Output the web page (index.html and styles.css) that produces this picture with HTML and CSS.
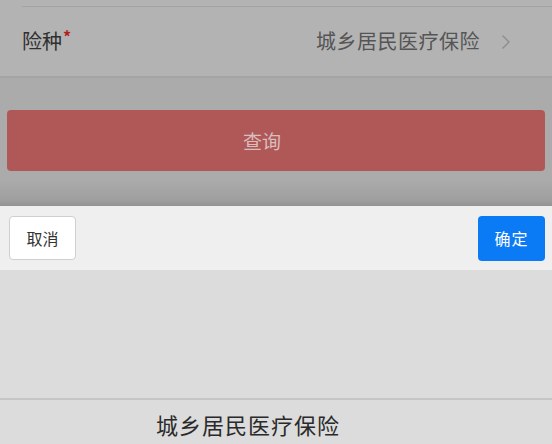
FILE: index.html
```html
<!DOCTYPE html>
<html lang="zh-CN">
<head>
<meta charset="utf-8">
<link rel="stylesheet" href="styles.css">
</head>
<body>
<div class="screen">
  <div class="form">
    <div class="top">
      <div class="cell">
        <div class="label">险种<span class="req">*</span></div>
        <div class="value">城乡居民医疗保险</div>
        <svg class="arrow" width="10" height="16" viewBox="0 0 10 16"><path d="M1.5 1.5 L8 8 L1.5 14.5" fill="none" stroke="#8d8d8d" stroke-width="1.4"/></svg>
      </div>
    </div>
    <div class="actions">
      <button class="query">查询</button>
    </div>
  </div>
  <div class="picker">
    <div class="toolbar">
      <button class="cancel">取消</button>
      <button class="ok">确定</button>
    </div>
    <div class="wheel">
      <div class="item">城乡居民医疗保险</div>
    </div>
  </div>
</div>
</body>
</html>
```
FILE: styles.css
```css
html, body {
  margin: 0;
  padding: 0;
}
body {
  width: 552px;
  height: 444px;
  overflow: hidden;
  font-family: "Noto Sans CJK SC", "Noto Sans", sans-serif;
  background: #b2b2b2;
}
.screen {
  display: flex;
  flex-direction: column;
  height: 444px;
}
.form {
  height: 206px;
  display: flex;
  flex-direction: column;
  background: linear-gradient(to bottom, #ababab 0, #ababab 180px, #9f9f9f 200px, #939393 206px);
}
.top {
  background: #b3b3b3;
  padding-top: 6px;
  border-bottom: 2px solid #a4a4a4;
}
.cell {
  height: 70px;
  display: flex;
  align-items: center;
  padding: 0 72px 0 22px;
  position: relative;
}
.cell::before {
  content: "";
  position: absolute;
  left: 22px;
  right: 0;
  top: 0;
  border-top: 1px solid #a3a3a3;
}
.label {
  font-size: 20px;
  color: #2f2f2f;
  flex: 1;
  margin-top: -2px;
}
.req {
  color: #b41e1e;
  font-size: 16px;
  font-weight: bold;
  vertical-align: top;
  position: relative;
  top: -2px;
  margin-left: 1px;
}
.value {
  font-size: 20px;
  color: #555555;
  letter-spacing: 0.5px;
  margin-top: -2px;
}
.arrow {
  position: absolute;
  right: 41px;
  top: 28px;
}
.actions {
  padding: 32px 7px 0 7px;
}
.query {
  display: block;
  width: 100%;
  height: 61px;
  border: none;
  border-radius: 4px;
  background: #b05858;
  color: #d9bebe;
  font-family: inherit;
  font-size: 19px;
  padding: 0 28px 0 0;
}
.picker {
  flex: 1;
  display: flex;
  flex-direction: column;
  background: #dcdcdc;
}
.toolbar {
  height: 64px;
  background: #efefef;
  display: flex;
  align-items: center;
  justify-content: space-between;
  padding: 0 7px 0 9px;
}
.cancel {
  width: 67px;
  height: 44px;
  background: #ffffff;
  border: 1px solid #cfcfcf;
  border-radius: 4px;
  font-family: inherit;
  font-size: 16px;
  color: #333333;
  padding: 0;
}
.ok {
  width: 67px;
  height: 45px;
  background: #0a7bf5;
  border: none;
  border-radius: 4px;
  font-family: inherit;
  font-size: 16px;
  color: #ffffff;
  padding: 0;
  letter-spacing: 1px;
}
.wheel {
  flex: 1;
  display: flex;
  flex-direction: column;
  justify-content: flex-end;
}
.item {
  height: 44px;
  border-top: 2px solid #c6c6c6;
  text-align: center;
  font-size: 22px;
  line-height: 48px;
  color: #2a2a2a;
  letter-spacing: 1px;
  padding-right: 56px;
}
```
